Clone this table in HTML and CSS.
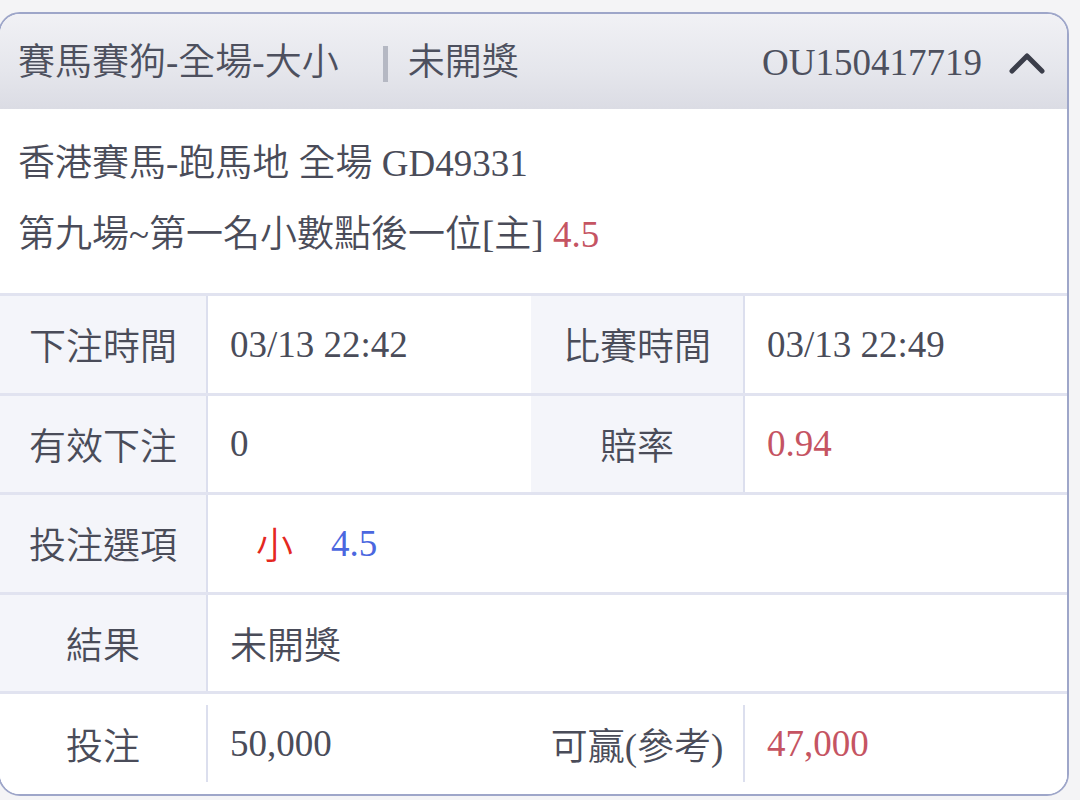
FILE: index.html
```html
<!DOCTYPE html>
<html lang="zh-Hant">
<head>
<meta charset="utf-8">
<link rel="stylesheet" href="styles.css">
</head>
<body>
<div class="card">
  <div class="head">
    <span class="title">賽馬賽狗-全場-大小</span>
    <span class="sep"></span>
    <span class="status">未開獎</span>
    <span class="order">OU150417719</span>
    <svg class="chev" width="36" height="22" viewBox="0 0 36 22"><path d="M3 19 L18 4 L33 19" fill="none" stroke="#3b3e4a" stroke-width="5" stroke-linecap="round" stroke-linejoin="round"/></svg>
  </div>
  <div class="info">
    <div class="line">香港賽馬-跑馬地 全場 GD49331</div>
    <div class="line">第九場~第一名小數點後一位[主] <span class="odds">4.5</span></div>
  </div>
  <div class="table">
    <div class="row">
      <div class="lbl">下注時間</div>
      <div class="val">03/13 22:42</div>
      <div class="lbl">比賽時間</div>
      <div class="val">03/13 22:49</div>
    </div>
    <div class="row">
      <div class="lbl">有效下注</div>
      <div class="val">0</div>
      <div class="lbl">賠率</div>
      <div class="val odds">0.94</div>
    </div>
    <div class="row">
      <div class="lbl">投注選項</div>
      <div class="val wide"><span class="pick">小</span><span class="line-val">4.5</span></div>
    </div>
    <div class="row">
      <div class="lbl">結果</div>
      <div class="val wide">未開獎</div>
    </div>
    <div class="row last">
      <div class="lbl">投注</div>
      <div class="val">50,000</div>
      <div class="lbl">可贏(參考)</div>
      <div class="val odds">47,000</div>
    </div>
  </div>
</div>
</body>
</html>
```

FILE: styles.css
```css
* { box-sizing: border-box; }
html, body {
  margin: 0;
  padding: 0;
  background: #f4f4f6;
  width: 1080px;
  height: 800px;
  overflow: hidden;
}
body {
  font-family: "Liberation Serif", "Noto Sans CJK TC", serif;
  color: #4a4c59;
  font-size: 37px;
  font-weight: 350;
}
.card {
  margin: 12px 11px 0 -2px;
  border: 2px solid #9ea6c9;
  border-radius: 22px;
  background: #fff;
  overflow: hidden;
}
.head {
  height: 95px;
  display: flex;
  align-items: center;
  padding: 0 22px 0 18px;
  background: linear-gradient(180deg, #f1f1f5 0%, #e5e6ec 60%, #dbdce4 100%);
  color: #4d505e;
}
.title { line-height: 1; margin-top: 2px; }
.sep {
  width: 5px;
  height: 36px;
  background: #b5b8c3;
  margin: 4px 20px 0 44px;
}
.status { line-height: 1; margin-top: 2px; }
.order {
  margin-left: auto;
  line-height: 1;
  margin-right: 27px;
  margin-top: 2px;
}
.chev { display: block; margin-top: 2px; }
.info {
  padding: 27px 0 24px 18px;
  background: #fff;
}
.line {
  height: 69px;
  line-height: 69px;
  white-space: nowrap;
}
.info .line:first-child { height: 64px; line-height: 56px; }
.odds { color: #c55462; }
.table { background: #fff; }
.row {
  display: grid;
  grid-template-columns: 208px 323px 214px 1fr;
  height: 99.5px;
  border-top: 3px solid #e1e3f0;
}
.lbl {
  background: #f4f5fa;
  border-right: 2px solid #dcdfee;
  display: flex;
  align-items: center;
  justify-content: center;
}
.val {
  display: flex;
  align-items: center;
  padding-left: 22px;
  background: #fff;
}
.val.wide { grid-column: 2 / 5; }
.pick {
  color: #e4281f;
  margin-left: 26px;
  margin-right: 38px;
}
.line-val { color: #4b67df; }
.row.last {
  height: 103px;
  padding: 11px 0 12px;
}
.row.last .lbl { background: #fff; }
```
